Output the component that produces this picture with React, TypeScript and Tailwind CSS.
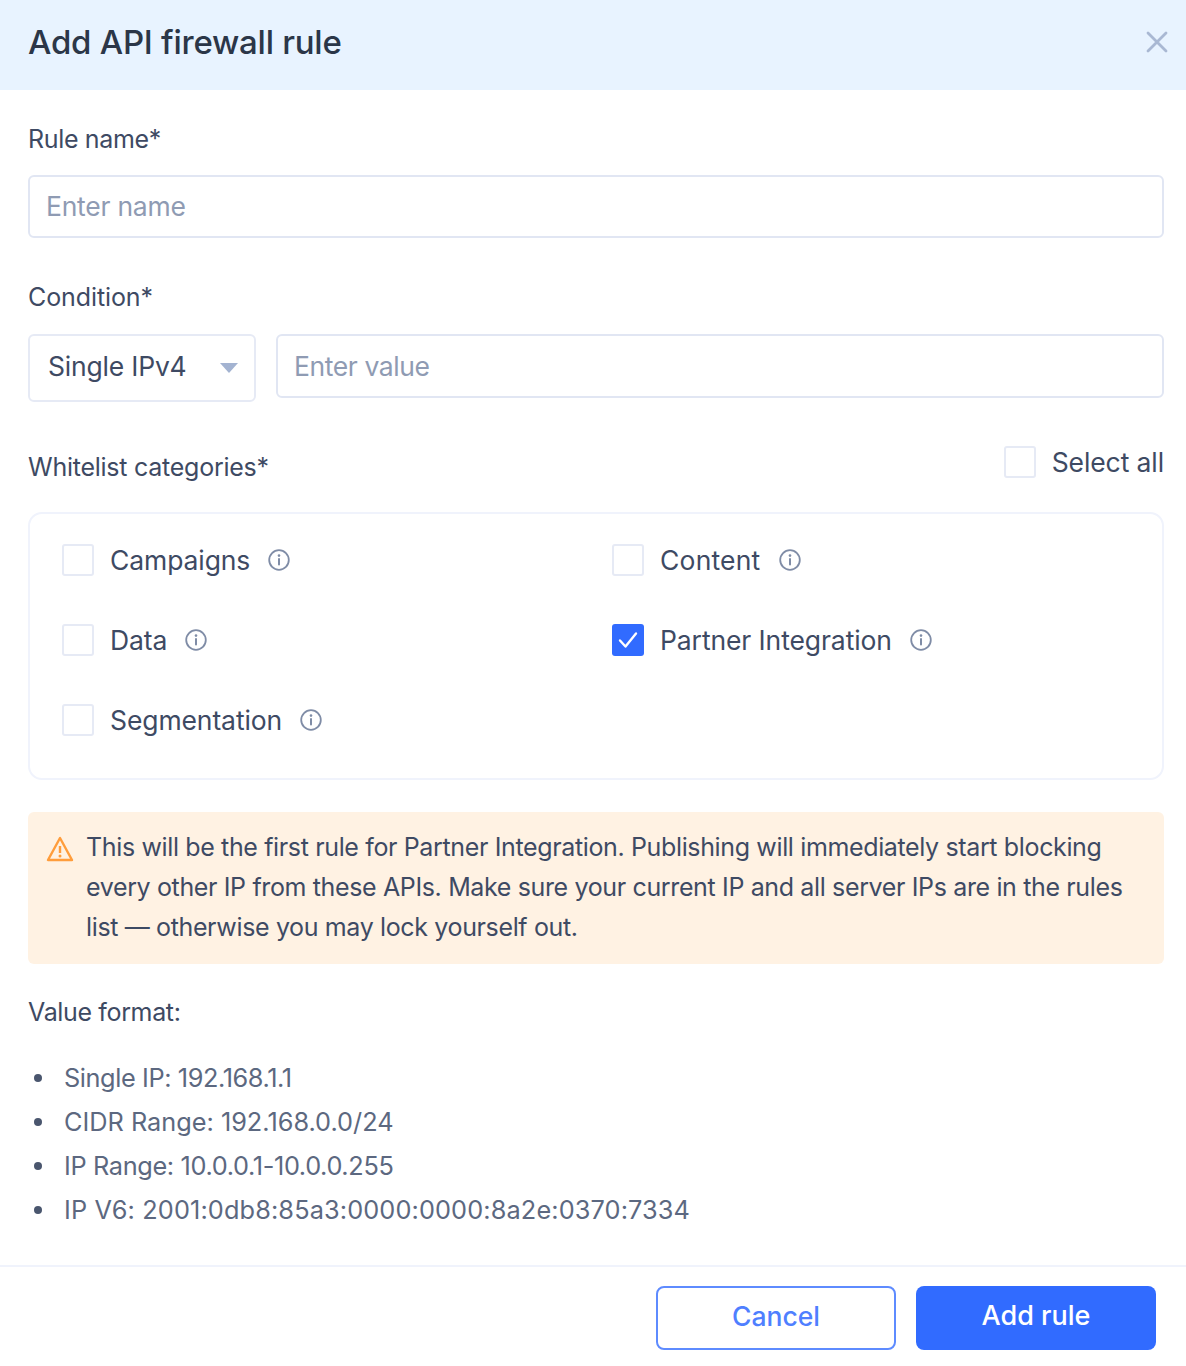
import React from "react";

function Info() {
  return (
    <svg viewBox="0 0 22 22" className="w-[22px] h-[22px] shrink-0" fill="none">
      <circle cx="11" cy="11" r="9.8" stroke="#7f8ca6" strokeWidth="1.8" />
      <path d="M11 10v5.5" stroke="#7f8ca6" strokeWidth="2" strokeLinecap="round" />
      <circle cx="11" cy="6.6" r="1.3" fill="#7f8ca6" />
    </svg>
  );
}

function Box({ checked = false }: { checked?: boolean }) {
  if (checked) {
    return (
      <span className="w-8 h-8 shrink-0 rounded-[3px] bg-[#316bff] flex items-center justify-center">
        <svg viewBox="0 0 32 32" className="w-8 h-8" fill="none">
          <path d="M8 16.5l5.5 6L24 9.5" stroke="#fff" strokeWidth="2.4" strokeLinecap="round" strokeLinejoin="round" />
        </svg>
      </span>
    );
  }
  return <span className="w-8 h-8 shrink-0 rounded-[3px] border-2 border-[#e6eaf5] bg-white" />;
}

function Cat({ label, checked = false, wide = false }: { label: string; checked?: boolean; wide?: boolean }) {
  return (
    <div className="flex items-center h-8">
      <Box checked={checked} />
      <span className={wide ? "ml-4 text-[26.5px] leading-8 text-[#3e4a63] tracking-[0.2px]" : "ml-4 text-[26.5px] leading-8 text-[#3e4a63] tracking-[-0.1px]"}>{label}</span>
      <span className="ml-[18px] flex"><Info /></span>
    </div>
  );
}

const formats = [
  { text: "Single IP: 192.168.1.1", cls: "ml-[22px] tracking-[-0.4px]" },
  { text: "CIDR Range: 192.168.0.0/24", cls: "ml-[22px]" },
  { text: "IP Range: 10.0.0.1-10.0.0.255", cls: "ml-[22px] tracking-[-0.35px]" },
  { text: "IP V6: 2001:0db8:85a3:0000:0000:8a2e:0370:7334", cls: "ml-[22px] tracking-[0.13px]" },
];

export default function App() {
  return (
    <div className="w-[1186px] h-[1366px] bg-white overflow-hidden font-['Inter',sans-serif] text-[#3e4a63] flex flex-col">
      <div className="h-[90px] shrink-0 bg-[#e8f3ff] pl-7 pr-[17px] pb-[6px] flex items-center justify-between">
        <h1 className="text-[33px] leading-[44px] font-medium tracking-[-0.25px] text-[#2b3648]">Add API firewall rule</h1>
        <svg viewBox="0 0 24 24" className="w-6 h-6" fill="none">
          <path d="M3 3l18 18M21 3L3 21" stroke="#a9b8d3" strokeWidth="2.8" strokeLinecap="round" />
        </svg>
      </div>

      <div className="flex-1 pl-7 pr-[22px] flex flex-col">
        <label className="mt-[31px] text-[25px] leading-9 tracking-[-0.35px] text-[#3e4a63]">Rule name*</label>
        <div className="mt-[18px] h-[63px] rounded-[6px] border-2 border-[#e1e6f3] flex items-center px-[16px] text-[26.5px] tracking-[-0.25px] text-[#8f9bb3]">Enter name</div>

        <label className="mt-[41px] text-[25px] leading-9 tracking-[-0.1px] text-[#3e4a63]">Condition*</label>
        <div className="mt-[19px] flex gap-5 items-start">
          <div className="w-[228px] h-[68px] rounded-[6px] border-2 border-[#e6eaf5] flex items-center justify-between pl-[18px] pr-4 text-[26.5px] tracking-[-0.2px] text-[#3e4a63]">
            <span className="pb-[2px]">Single IPv4</span>
            <svg viewBox="0 0 18 10" className="w-[18px] h-[10px]"><path d="M0 0h18l-9 10z" fill="#a3b3d1" /></svg>
          </div>
          <div className="flex-1 h-[64px] rounded-[6px] border-2 border-[#e1e6f3] flex items-center px-[16px] pt-[2px] text-[26.5px] tracking-[-0.4px] text-[#8f9bb3]">Enter value</div>
        </div>

        <div className="mt-11 flex justify-between items-start">
          <label className="mt-[3px] text-[25px] leading-9 tracking-[-0.25px] text-[#3e4a63]">Whitelist categories*</label>
          <div className="flex items-center h-8">
            <Box />
            <span className="ml-4 text-[26.5px] leading-8 tracking-[-0.1px] text-[#3e4a63]">Select all</span>
          </div>
        </div>

        <div className="mt-[27px] h-[268px] rounded-[14px] border-2 border-[#f0f3fc] pl-8 pt-[30px] grid grid-cols-[550px_1fr] grid-rows-[32px_32px_32px] gap-y-12">
          <Cat label="Campaigns" />
          <Cat label="Content" wide />
          <Cat label="Data" />
          <Cat label="Partner Integration" checked />
          <Cat label="Segmentation" />
        </div>

        <div className="mt-8 h-[152px] rounded-[6px] bg-[#fff2e3] pl-[18px] pt-[15px] flex">
          <svg viewBox="0 0 28 26" className="w-7 h-[26px] mt-[9px] shrink-0" fill="none">
            <path d="M14 2L2 24h24L14 2z" stroke="#ff9d3c" strokeWidth="2.4" strokeLinejoin="round" />
            <path d="M14 10v7" stroke="#ff9d3c" strokeWidth="2.4" />
            <circle cx="14" cy="20" r="1.5" fill="#ff9d3c" />
          </svg>
          <p className="ml-3 w-[1050px] text-[25px] leading-10 tracking-[-0.36px] text-[#3e4a63]">
            This will be the first rule for Partner Integration. Publishing will immediately start blocking every other IP from these APIs. Make sure your current IP and all server IPs are in the rules list — otherwise you may lock yourself out.
          </p>
        </div>

        <div className="mt-[30px] text-[25px] leading-9 tracking-[-0.35px] text-[#3e4a63]">Value format:</div>
        <ul className="mt-[26px] flex flex-col">
          {formats.map((f) => (
            <li key={f.text} className="h-11 flex items-center text-[25.3px] text-[#5c6880]">
              <span className="ml-[6px] w-2 h-2 rounded-full bg-[#4a566e] shrink-0" />
              <span className={f.cls}>{f.text}</span>
            </li>
          ))}
        </ul>
      </div>

      <div className="h-[101px] shrink-0 border-t-2 border-[#f0f3fc] pt-[19px] pr-[30px] flex justify-end gap-5">
        <button className="w-60 h-16 rounded-[8px] border-2 border-[#5e8bff] bg-white pb-[3px] text-[26.5px] font-medium text-[#4f7fff]">Cancel</button>
        <button className="w-60 h-16 rounded-[8px] bg-[#316bff] pb-[3px] text-[27px] font-medium text-white">Add rule</button>
      </div>
    </div>
  );
}
